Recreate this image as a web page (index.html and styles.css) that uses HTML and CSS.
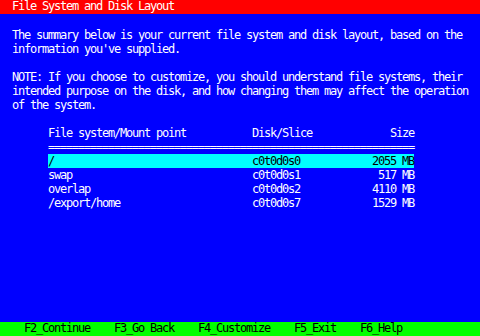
FILE: index.html
```html
<!DOCTYPE html>
<html lang="en">
<head>
  <meta charset="UTF-8" />
  <meta name="viewport" content="width=device-width, initial-scale=1.0" />
  <title>File System and Disk Layout</title>
  <link rel="stylesheet" href="styles.css">
</head>
<body>
  <div class="screen">
    <div class="title-bar">File System and Disk Layout</div>

    <div class="content">
      <p class="text">The summary below is your current file system and disk layout, based on the<br>information you've supplied.</p>

      <p class="text">NOTE: If you choose to customize, you should understand file systems, their<br>intended purpose on the disk, and how changing them may affect the operation<br>of the system.</p>

      <div class="layout-table">
        <div class="row">
          <span>File system/Mount point</span>
          <span>Disk/Slice</span>
          <span class="size">Size</span>
        </div>
        <div class="rule">=============================================================</div>
        <div class="row selected">
          <span>/</span>
          <span>c0t0d0s0</span>
          <span class="size">2055 MB</span>
        </div>
        <div class="row">
          <span>swap</span>
          <span>c0t0d0s1</span>
          <span class="size">517 MB</span>
        </div>
        <div class="row">
          <span>overlap</span>
          <span>c0t0d0s2</span>
          <span class="size">4110 MB</span>
        </div>
        <div class="row">
          <span>/export/home</span>
          <span>c0t0d0s7</span>
          <span class="size">1529 MB</span>
        </div>
      </div>
    </div>

    <div class="key-bar">
      <span>F2_Continue</span>
      <span>F3_Go Back</span>
      <span>F4_Customize</span>
      <span>F5_Exit</span>
      <span>F6_Help</span>
    </div>
  </div>
</body>
</html>
```

FILE: styles.css
```css
:root {
  --term-blue: #0000ff;
  --term-red: #ff0000;
  --term-cyan: #00ffff;
  --term-green: #00ff00;
  --cell-h: 14px;
}
* {
  box-sizing: border-box;
  margin: 0;
  padding: 0;
}
body {
  background-color: var(--term-blue);
  color: #ffffff;
  font-family: "DejaVu Sans Mono", "Liberation Mono", monospace;
  font-size: 12px;
  letter-spacing: -1.225px;
  line-height: var(--cell-h);
}
.screen {
  width: 480px;
  height: 336px;
  display: flex;
  flex-direction: column;
  white-space: nowrap;
}
.title-bar {
  background-color: var(--term-red);
  height: var(--cell-h);
  line-height: 13px;
  padding-left: 12px;
}
.content {
  flex: 1;
  padding: var(--cell-h) 12px 0;
}
.text {
  margin-bottom: var(--cell-h);
}
.layout-table {
  margin-left: 36px;
  width: 366px;
}
.row {
  display: grid;
  grid-template-columns: 204px 1fr auto;
  height: var(--cell-h);
}
.size {
  text-align: right;
}
.row.selected {
  background-color: var(--term-cyan);
  color: #000000;
}
.key-bar {
  background-color: var(--term-green);
  color: #000000;
  height: var(--cell-h);
  line-height: 12px;
  display: flex;
  gap: 24px;
  padding-left: 24px;
}
```
